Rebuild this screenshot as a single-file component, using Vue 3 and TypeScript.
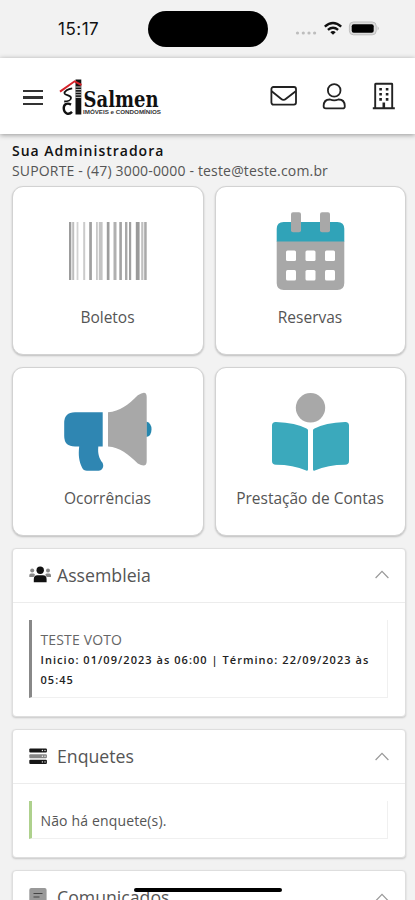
<script setup lang="ts">
interface Bar { x: number; w: number; c: string }
interface Panel { id: string; title: string; icon: 'users' | 'server' | 'note' }

const bars: Bar[] = [
  { x: 0, w: 2.3, c: '#9c9c9c' }, { x: 3.2, w: 2, c: '#bdbdbd' }, { x: 7.6, w: 1.8, c: '#d2d2d2' },
  { x: 14.2, w: 2, c: '#cbcbcb' }, { x: 20.2, w: 2.7, c: '#a0a0a0' }, { x: 27, w: 1.8, c: '#c8c8c8' },
  { x: 29.8, w: 3.8, c: '#c4c4c4' }, { x: 37.8, w: 2.7, c: '#9d9d9d' }, { x: 44.5, w: 3, c: '#b0b0b0' },
  { x: 50.3, w: 2.6, c: '#a2a2a2' }, { x: 56, w: 2.4, c: '#a8a8a8' }, { x: 60, w: 2.2, c: '#a0a0a0' },
  { x: 66.8, w: 3.8, c: '#9a9a9a' }, { x: 72.2, w: 2.2, c: '#c0c0c0' }, { x: 75.2, w: 2.5, c: '#a9a9a9' },
]
const windows: number[][] = [[20, 40.5], [39.5, 40.5], [59, 40.5], [20, 60], [39.5, 60], [59, 60]]
const panels: Panel[] = [
  { id: 'assembleia', title: 'Assembleia', icon: 'users' },
  { id: 'enquetes', title: 'Enquetes', icon: 'server' },
  { id: 'comunicados', title: 'Comunicados', icon: 'note' },
]
</script>

<template>
  <div class="screen">
    <div class="status">
      <span class="clock">15:17</span>
      <span class="island"></span>
      <svg class="signals" width="86" height="18" viewBox="0 0 86 18">
        <g fill="#bdbdbd">
          <circle cx="2.5" cy="13" r="1.6" /><circle cx="8.3" cy="13" r="1.6" />
          <circle cx="14" cy="13" r="1.6" /><circle cx="19.6" cy="13" r="1.6" />
        </g>
        <g fill="none" stroke="#111" stroke-width="2.4">
          <path d="M29.8 6.6Q38 -.4 46.2 6.6" /><path d="M32.9 9.9Q38 5.6 43.1 9.9" />
        </g>
        <path d="M35.3 12.2Q38 10 40.7 12.2L38 14.7Z" fill="#111" />
        <rect x="54.4" y="2" width="26.8" height="12.8" rx="4" fill="#dcdcdc" stroke="#bdbdbd" stroke-width="1" />
        <rect x="56.7" y="4.2" width="22" height="8.6" rx="2" fill="#000" />
        <path d="M82.6 6.2Q84.8 8.4 82.6 10.6Z" fill="#b5b5b5" />
      </svg>
    </div>

    <header class="topbar">
      <div class="burger"><i></i><i></i><i></i></div>
      <svg class="logo" width="106" height="42" viewBox="0 0 106 42">
        <rect x="15.5" y="2.5" width="5.8" height="35" fill="#111" />
        <path d="M15.5 10h5.8M15.5 12.6h5.8M15.5 15.2h5.8M15.5 17.8h5.8M15.5 20.4h5.8" stroke="#fff" stroke-width=".8" />
        <path d="M0 14.6L14.6 4.3L21.5 8" fill="none" stroke="#d5242b" stroke-width="2" />
        <path d="M12.2 11.3C8 11.8 4 14.4 4.6 16.6C5.2 18.6 11 17.8 11 21C11 23 8 24.5 4.2 24.5" fill="none" stroke="#111" stroke-width="1.8" />
        <path d="M11 27.6C6.5 25 3.3 28 3.8 32C4.3 36.9 9 38.2 12 34.9" fill="none" stroke="#111" stroke-width="2.4" />
        <text x="23.5" y="30" class="brand" textLength="75" lengthAdjust="spacingAndGlyphs">Salmen</text>
        <text x="23" y="37.2" class="tagline" textLength="78" lengthAdjust="spacingAndGlyphs">IMÓVEIS e CONDOMÍNIOS</text>
      </svg>
      <nav class="actions">
        <svg width="28" height="28" viewBox="0 0 28 28" fill="none" stroke="#222" stroke-width="1.8">
          <rect x="1.4" y="5" width="24.6" height="17.6" rx="2" />
          <path d="M1.7 9.3L11 16.8Q13.5 19 16 16.8L25.7 9.3" />
        </svg>
        <svg width="28" height="28" viewBox="0 0 28 28" fill="none" stroke="#222" stroke-width="1.8">
          <circle cx="14.2" cy="8.4" r="6.3" />
          <path d="M10 17.5C5.5 17.4 3.7 20 3.6 24Q3.6 26.4 5.9 26.4H22.6Q24.9 26.4 24.8 24C24.7 20 22.8 17.4 18.4 17.5Q14.2 19.3 10 17.5Z" />
        </svg>
        <svg width="28" height="28" viewBox="0 0 28 28" fill="none" stroke="#222" stroke-width="1.9">
          <path d="M5.2 25.8V2.3Q5.2 1.8 5.7 1.8H21.7Q22.2 1.8 22.2 2.3V25.8M2.8 26.3H24.8" />
          <path d="M13.8 26V20.5" stroke-width="2.6" />
          <path d="M9.3 7.2h2.6M15.8 7.2h2.6M9.3 12.3h2.6M15.8 12.3h2.6M9.3 17.4h2.6M15.8 17.4h2.6" stroke-width="2.6" />
        </svg>
      </nav>
    </header>

    <main class="content">
      <section class="admin">
        <strong>Sua Administradora</strong>
        <span>SUPORTE - (47) 3000-0000 - teste@teste.com.br</span>
      </section>

      <section class="tiles">
        <div class="tile">
          <svg width="90" height="80" viewBox="0 0 90 80">
            <rect v-for="b in bars" :key="b.x" :x="b.x + 6" y="12" :width="b.w" height="58" :fill="b.c" />
          </svg>
          <span>Boletos</span>
        </div>
        <div class="tile">
          <svg width="90" height="80" viewBox="0 0 90 80">
            <path d="M10.7 31H78.3V73Q78.3 80 71.3 80H17.7Q10.7 80 10.7 73Z" fill="#a8a8a8" />
            <path d="M10.7 31.5V19Q10.7 12 17.7 12H71.3Q78.3 12 78.3 19V31.5Z" fill="#30a3b8" />
            <rect x="25" y="2.3" width="10" height="20" rx="2" fill="#a8a8a8" />
            <rect x="54" y="2.3" width="10" height="20" rx="2" fill="#a8a8a8" />
            <rect v-for="(w, i) in windows" :key="i" :x="w[0]" :y="w[1]" width="10" height="10.5" rx="1.5" fill="#fff" />
          </svg>
          <span>Reservas</span>
        </div>
        <div class="tile">
          <svg width="90" height="80" viewBox="0 0 90 80">
            <path d="M39.7 22.2V56.5H35.3C34.5 64 36.5 69 39.4 72.6C41.5 76.5 39.5 80.7 35.5 80.7H24Q20.5 80.7 19 77.5C16 71 15.2 65 16.2 56.5H12Q1.2 56.5 1.2 46V33Q1.2 22.2 12 22.2Z" transform="translate(0 -1)" fill="#2f86b2" />
            <path d="M83.3 30.5Q88.5 32 88.5 38.5T83.3 46Z" fill="#2687ae" />
            <path d="M45 21.3C57 20.5 65 14 74.8 4.3Q83.7-1.5 83.7 6V70Q83.7 77.5 74.8 72.5C65 63 57 56.3 45 55.5Z" fill="#a8a8a8" />
          </svg>
          <span>Ocorrências</span>
        </div>
        <div class="tile">
          <svg width="90" height="80" viewBox="0 0 90 80">
            <g transform="translate(0 -1)">
              <circle cx="44.5" cy="17.8" r="14.7" fill="#a8a8a8" />
              <path d="M42 40.2V79.5Q42 81.2 40.2 80.4Q27 74.8 10 74.8Q6 74.8 6 71V35.5Q6 31.8 10 32Q30 32.8 40.5 38.4Q42 39.2 42 40.2Z" fill="#3ba9bc" />
              <path d="M47 40.2V79.5Q47 81.2 48.8 80.4Q62 74.8 79 74.8Q83 74.8 83 71V35.5Q83 31.8 79 32Q59 32.8 48.5 38.4Q47 39.2 47 40.2Z" fill="#3ba9bc" />
            </g>
          </svg>
          <span>Prestação de Contas</span>
        </div>
      </section>

      <section v-for="p in panels" :key="p.id" class="panel" :class="p.id">
        <div class="panel-head">
          <svg v-if="p.icon === 'users'" class="icon" width="23" height="18" viewBox="0 0 23 18">
            <g fill="#888">
              <circle cx="3.2" cy="4.5" r="2" /><circle cx="19" cy="4.5" r="2" />
              <path d="M.3 11V9.3Q.3 7.5 2 7.5H4.5Q6 7.5 6 9L4.6 11ZM22 11V9.3Q22 7.5 20.3 7.5H17.8Q16.3 7.5 16.3 9L17.7 11Z" />
            </g>
            <circle cx="11.2" cy="4.3" r="3.7" fill="#111" />
            <path d="M4.8 16.3V13Q4.8 9.2 8.3 9.2H14Q17.6 9.2 17.6 13V16.3Z" fill="#111" />
          </svg>
          <svg v-else-if="p.icon === 'server'" class="icon" width="23" height="18" viewBox="0 0 23 18">
            <rect x=".3" y="1.4" width="17.6" height="4.2" rx="1" fill="#161616" />
            <rect x=".3" y="7.2" width="17.6" height="4" rx="1" fill="#858585" />
            <rect x=".3" y="12.8" width="17.6" height="4.2" rx="1" fill="#161616" />
            <g fill="#eee"><circle cx="13.4" cy="3.5" r=".7" /><circle cx="16" cy="3.5" r=".7" /><circle cx="13.4" cy="9.2" r=".7" /><circle cx="16" cy="9.2" r=".7" /><circle cx="13.4" cy="14.9" r=".7" /><circle cx="16" cy="14.9" r=".7" /></g>
          </svg>
          <svg v-else class="icon" width="23" height="18" viewBox="0 0 23 18">
            <rect x=".3" y="0" width="17.3" height="18" rx="2" fill="#999" />
            <path d="M4.5 5.5h9M4.5 9h6" stroke="#444" stroke-width="1.2" />
          </svg>
          <h2>{{ p.title }}</h2>
          <svg class="chevron" width="14" height="9" viewBox="0 0 14 9"><path d="M.6 8L7 1.4L13.4 8" fill="none" stroke="#999" stroke-width="1.2" /></svg>
        </div>
        <div class="panel-body">
          <div v-if="p.id === 'assembleia'" class="note gray">
            <span class="name">TESTE VOTO</span>
            <b>Inicio: 01/09/2023 às 06:00 | Término: 22/09/2023 às 05:45</b>
          </div>
          <div v-else-if="p.id === 'enquetes'" class="note green"><span class="empty">Não há enquete(s).</span></div>
        </div>
      </section>
    </main>
    <span class="home-bar"></span>
  </div>
</template>

<style>
body { margin: 0; overflow: hidden; }
</style>

<style scoped>
* { box-sizing: border-box; }
.screen { position: relative; height: 900px; overflow: hidden; background: #f2f2f2; font-family: "Open Sans", "Noto Sans", sans-serif; color: #555; display: flex; flex-direction: column; }
.status { height: 58px; flex: none; display: grid; grid-template-columns: 148px 120px 1fr; align-items: center; }
.clock { padding-left: 58px; font: 400 17px/20px Inter, "Liberation Sans", sans-serif; color: #111; letter-spacing: .5px; }
.island { height: 36px; border-radius: 18px; background: #000; }
.signals { margin-left: 27px; }
.topbar { height: 76px; flex: none; background: #fff; box-shadow: 0 1px 5px rgba(0, 0, 0, .38); display: flex; align-items: center; padding: 0 17px 0 23px; position: relative; }
.burger { display: flex; flex-direction: column; gap: 4px; width: 20px; margin-top: 3px; }
.burger i { height: 2.6px; background: #333; }
.logo { margin: 3px 0 0 17px; overflow: visible; }
.brand { font: bold 22px "DejaVu Serif", serif; fill: #111; }
.tagline { font: bold 5.5px "Liberation Sans", sans-serif; fill: #333; }
.actions { margin-left: auto; display: flex; gap: 22px; }
.content { padding: 7px 9px 0 12px; flex: none; }
.admin { height: 45px; display: flex; flex-direction: column; white-space: nowrap; }
.admin strong { font-size: 14px; line-height: 19px; font-weight: 600; letter-spacing: 1px; color: #111; }
.admin span { font-size: 14px; line-height: 21px; letter-spacing: .17px; }
.tiles { display: grid; grid-template-columns: 192px 191px; grid-auto-rows: 169px; gap: 12px 11px; }
.tile { background: #fff; border: 1px solid #d2d2d2; border-radius: 11px; box-shadow: 0 1px 2px rgba(0, 0, 0, .22); display: flex; flex-direction: column; align-items: center; padding-top: 23px; }
.tile svg { overflow: visible; flex: none; }
.tile span { margin: 16px 1px 0 0; font-size: 15.5px; line-height: 22px; white-space: nowrap; }
.panel { margin-top: 12px; background: #fff; border: 1px solid #dedede; border-radius: 4px; box-shadow: 0 1px 2px rgba(0, 0, 0, .18); }
.panel-head { height: 54px; border-bottom: 1px solid #ececec; display: flex; align-items: center; padding: 0 16px 1px; }
.assembleia .panel-head { padding-bottom: 2px; }
.icon { flex: none; margin-right: 5px; }
h2 { margin: 0; font-size: 17.7px; line-height: 24px; font-weight: 400; }
.chevron { margin-left: auto; }
.panel-body { padding: 17px 17px 18px 16px; }
.note { border-left: 3px solid #888; border-right: 1px solid #f0f0f0; border-bottom: 1px solid #f0f0f0; padding-left: 8.5px; display: flex; flex-direction: column; }
.gray { height: 78px; padding-top: 8.5px; }
.name { font-size: 14px; line-height: 21px; letter-spacing: .15px; color: #666; }
.note b { font-size: 11px; line-height: 20px; font-weight: 600; letter-spacing: 1.04px; color: #222; }
.green { height: 38px; border-left-color: #aed18d; justify-content: center; }
.empty { font-size: 14px; line-height: 20px; letter-spacing: .15px; padding-top: 2px; }
.comunicados { height: 70px; }
.home-bar { position: absolute; left: 134px; top: 888px; width: 148px; height: 4px; border-radius: 2px; background: #000; }
</style>
